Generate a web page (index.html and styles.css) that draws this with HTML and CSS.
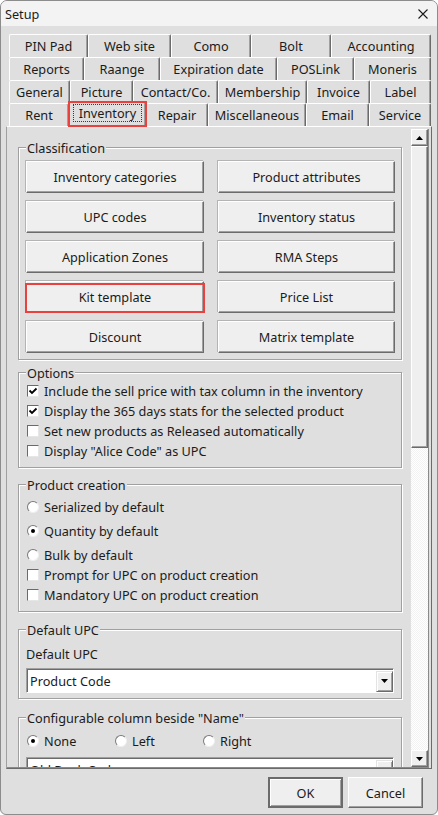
FILE: index.html
```html
<!DOCTYPE html>
<html>
<head>
<meta charset="utf-8">
<title>Setup</title>
<link rel="stylesheet" href="styles.css">
</head>
<body>
<div class="window">
  <div class="titlebar">
    <span class="title">Setup</span>
    <svg class="close" viewBox="0 0 10 10" width="10" height="10"><path d="M0.5 0.5 L9.5 9.5 M9.5 0.5 L0.5 9.5" stroke="#1b1b1b" stroke-width="1.1" fill="none"/></svg>
  </div>

  <div class="tabs">
    <div class="tabrow r1">
      <div class="tab">PIN Pad</div><div class="tab">Web site</div><div class="tab">Como</div><div class="tab">Bolt</div><div class="tab">Accounting</div>
    </div>
    <div class="tabrow r2">
      <div class="tab">Reports</div><div class="tab">Raange</div><div class="tab">Expiration date</div><div class="tab">POSLink</div><div class="tab">Moneris</div>
    </div>
    <div class="tabrow r3">
      <div class="tab">General</div><div class="tab">Picture</div><div class="tab">Contact/Co.</div><div class="tab">Membership</div><div class="tab">Invoice</div><div class="tab">Label</div>
    </div>
    <div class="tabrow r4">
      <div class="tab">Rent</div><div class="tab sel mark"><span class="focus">Inventory</span></div><div class="tab">Repair</div><div class="tab">Miscellaneous</div><div class="tab">Email</div><div class="tab">Service</div>
    </div>
  </div>

  <div class="panel">
    <div class="viewport">
      <div class="content">
        <div class="group g-class">
          <div class="legend">Classification</div>
          <div class="btngrid">
            <div class="btn">Inventory categories</div>
            <div class="btn">Product attributes</div>
            <div class="btn">UPC codes</div>
            <div class="btn">Inventory status</div>
            <div class="btn">Application Zones</div>
            <div class="btn">RMA Steps</div>
            <div class="btn mark">Kit template</div>
            <div class="btn">Price List</div>
            <div class="btn">Discount</div>
            <div class="btn">Matrix template</div>
          </div>
        </div>

        <div class="group g-opt">
          <div class="legend">Options</div>
          <div class="row chk"><span class="cb on"><svg viewBox="0 0 10 10" width="10" height="10"><path d="M1.5 4.5 L4 7 L8.5 2.5" stroke="#000" stroke-width="1.8" fill="none"/></svg></span>Include the sell price with tax column in the inventory</div>
          <div class="row chk"><span class="cb on"><svg viewBox="0 0 10 10" width="10" height="10"><path d="M1.5 4.5 L4 7 L8.5 2.5" stroke="#000" stroke-width="1.8" fill="none"/></svg></span>Display the 365 days stats for the selected product</div>
          <div class="row chk"><span class="cb"></span>Set new products as Released automatically</div>
          <div class="row chk"><span class="cb"></span>Display "Alice Code" as UPC</div>
        </div>

        <div class="group g-prod">
          <div class="legend">Product creation</div>
          <div class="radios">
            <div class="row rad"><span class="rb"></span>Serialized by default</div>
            <div class="row rad"><span class="rb on"></span>Quantity by default</div>
            <div class="row rad"><span class="rb"></span>Bulk by default</div>
          </div>
          <div class="checks">
            <div class="row chk"><span class="cb"></span>Prompt for UPC on product creation</div>
            <div class="row chk"><span class="cb"></span>Mandatory UPC on product creation</div>
          </div>
        </div>

        <div class="group g-upc">
          <div class="legend">Default UPC</div>
          <div class="label">Default UPC</div>
          <div class="combo">
            <span class="combo-text">Product Code</span>
            <span class="drop"><svg viewBox="0 0 7 4" width="7" height="4"><path d="M0 0 H7 L3.5 4 Z" fill="#000"/></svg></span>
          </div>
        </div>

        <div class="group g-conf">
          <div class="legend">Configurable column beside "Name"</div>
          <div class="radrow">
            <div class="row rad"><span class="rb on"></span>None</div>
            <div class="row rad"><span class="rb"></span>Left</div>
            <div class="row rad"><span class="rb"></span>Right</div>
          </div>
          <div class="combo">
            <span class="combo-text">Old Bank Code</span>
            <span class="drop"><svg viewBox="0 0 7 4" width="7" height="4"><path d="M0 0 H7 L3.5 4 Z" fill="#000"/></svg></span>
          </div>
        </div>
      </div>

      <div class="scrollbar">
        <div class="sb-btn"><svg viewBox="0 0 7 4" width="7" height="4"><path d="M0 4 H7 L3.5 0 Z" fill="#000"/></svg></div>
        <div class="sb-thumb"></div>
        <div class="sb-track"></div>
        <div class="sb-btn"><svg viewBox="0 0 7 4" width="7" height="4"><path d="M0 0 H7 L3.5 4 Z" fill="#000"/></svg></div>
      </div>
    </div>
  </div>

  <div class="footer">
    <div class="dbtn default">OK</div>
    <div class="dbtn">Cancel</div>
  </div>
</div>
</body>
</html>
```

FILE: styles.css
```css
* { box-sizing: border-box; }
html, body { margin: 0; padding: 0; background: #ffffff; }
body {
  font-family: "Noto Sans", "Open Sans", sans-serif;
  font-size: 12.7px;
  color: #1b1b1b;
  line-height: 16px;
}

.window {
  width: 438px;
  height: 815px;
  border: 1px solid #8c8c8c;
  border-radius: 7px 7px 6px 6px;
  background: #dfdfdf;
  overflow: hidden;
  display: flex;
  flex-direction: column;
}

.titlebar {
  flex: none;
  height: 25px;
  background: #f3f3f3;
  display: flex;
  align-items: center;
  justify-content: space-between;
  padding: 0 9px 0 4px;
}
.close { display: block; }

/* tabs */
.tabs {
  flex: none;
  margin: 8px 0 0 8px;
  width: 422px;
  display: flex;
  flex-direction: column;
}
.tabrow { display: grid; grid-template-rows: 23px; }
.r1 { grid-template-columns: 79px 83px 80px 80px 100px; }
.r2 { grid-template-columns: 75px 76px 117px 77px 77px; }
.r3 { grid-template-columns: 61px 63px 85px 89px 63px 61px; }
.r4 { grid-template-columns: 60px 77px 62px 98px 63px 62px; }
.tab {
  display: flex;
  align-items: center;
  justify-content: center;
  white-space: nowrap;
  border-top: 1px solid #ffffff;
  border-left: 1px solid #ffffff;
  border-right: 1px solid #6b6b6b;
  box-shadow: inset -1px 0 0 #a0a0a0;
  border-radius: 2px 2px 0 0;
  background: #dfdfdf;
}
.tab.sel {
  margin-top: -2px;
  height: 26px;
  position: relative;
  z-index: 1;
  padding-bottom: 3px;
}
.focus {
  border: 1px dotted #3a3a3a;
  padding: 0 5px;
  line-height: 16px;
}
.mark { position: relative; }
.mark::after {
  content: "";
  position: absolute;
  border: 2px solid #e8413e;
  pointer-events: none;
}
.tab.mark::after { top: -1px; left: -2px; right: -2px; bottom: 0; }
.btn.mark::after { top: 1px; left: -2px; right: -2px; bottom: -1px; }

/* panel */
.panel {
  flex: none;
  margin-left: 5px;
  width: 426px;
  height: 643px;
  border-top: 1px solid #ffffff;
  border-left: 1px solid #a0a0a0;
  border-right: 1px solid #6b6b6b;
  border-bottom: 1px solid #6b6b6b;
  padding: 2px 2px 0 0;
}
.viewport {
  display: flex;
  height: 639px;
  border-bottom: 1px solid #8a8a8a;
}
.content {
  width: 404px;
  height: 638px;
  overflow: hidden;
  padding: 18px 9px 0 11px;
}

/* scrollbar */
.scrollbar {
  width: 18px;
  height: 638px;
  border-right: 1px solid #8a8a8a;
  display: flex;
  flex-direction: column;
}
.sb-btn {
  flex: none;
  height: 17px;
  display: flex;
  align-items: center;
  justify-content: center;
  background: #efefef;
  border-top: 1px solid #ffffff;
  border-left: 1px solid #ffffff;
  border-right: 1px solid #6b6b6b;
  border-bottom: 1px solid #6b6b6b;
  box-shadow: inset -1px -1px 0 #a0a0a0;
}
.sb-btn svg { display: block; }
.sb-thumb {
  flex: none;
  height: 302px;
  background: #efefef;
  border-top: 1px solid #ffffff;
  border-left: 1px solid #ffffff;
  border-right: 1px solid #6b6b6b;
  border-bottom: 1px solid #6b6b6b;
  box-shadow: inset -1px -1px 0 #a0a0a0;
}
.sb-track {
  flex: 1;
  background: repeating-conic-gradient(#f2f2f2 0 25%, #ffffff 0 50%) 0 0 / 2px 2px;
}

/* group boxes */
.group {
  width: 384px;
  border: 1px solid #a0a0a0;
  box-shadow: 1px 1px 0 #ffffff, inset 1px 1px 0 #ffffff;
  padding: 0 6px 6px 7px;
}
.legend {
  width: max-content;
  height: 16px;
  margin-top: -8px;
  padding: 0 1px;
  background: #dfdfdf;
  white-space: nowrap;
}
.g-opt { margin-top: 12px; }
.g-prod { margin-top: 16px; }
.g-upc { margin-top: 17px; padding-bottom: 5px; }
.g-conf { margin-top: 18px; }

.btngrid {
  margin-top: 5px;
  display: grid;
  grid-template-columns: 178px 177px;
  grid-auto-rows: 32px;
  column-gap: 14px;
  row-gap: 8px;
}
.btn {
  display: flex;
  align-items: center;
  justify-content: center;
  background: #efefef;
  border-top: 1px solid #ffffff;
  border-left: 1px solid #ffffff;
  border-right: 1px solid #6b6b6b;
  border-bottom: 1px solid #6b6b6b;
  box-shadow: inset -1px -1px 0 #a0a0a0, -1px -1px 0 #b4b4b4;
  white-space: nowrap;
}

/* rows */
.row {
  display: flex;
  align-items: center;
  gap: 5px;
  padding-left: 1px;
  white-space: nowrap;
}
.chk { height: 20px; }
.rad { height: 24px; }
.radios { margin-top: 2px; }
.checks { margin-top: -2px; }

.cb {
  flex: none;
  width: 12px;
  height: 12px;
  background: #ffffff;
  border-top: 1px solid #6b6b6b;
  border-left: 1px solid #6b6b6b;
  border-right: 1px solid #e6e6e6;
  border-bottom: 1px solid #e6e6e6;
  display: flex;
  align-items: center;
  justify-content: center;
}
.cb svg { display: block; }

.rb {
  flex: none;
  width: 12px;
  height: 12px;
  border-radius: 50%;
  background: #ffffff;
  border: 1px solid;
  border-color: #7a7a7a #f0f0f0 #f0f0f0 #7a7a7a;
  display: flex;
  align-items: center;
  justify-content: center;
}
.rb.on::after {
  content: "";
  width: 4px;
  height: 4px;
  border-radius: 50%;
  background: #000000;
}

.label { margin-top: 8px; height: 16px; }

.combo {
  margin-top: 6px;
  width: 368px;
  height: 25px;
  background: #ffffff;
  border-top: 1px solid #a0a0a0;
  border-left: 1px solid #a0a0a0;
  border-right: 1px solid #ffffff;
  border-bottom: 1px solid #ffffff;
  box-shadow: inset 1px 1px 0 #6b6b6b;
  display: flex;
  align-items: center;
  justify-content: space-between;
  padding: 1px 0 0 3px;
}
.drop {
  width: 17px;
  height: 21px;
  display: flex;
  align-items: center;
  justify-content: center;
  background: #efefef;
  border-top: 1px solid #e3e3e3;
  border-left: 1px solid #e3e3e3;
  border-right: 1px solid #6b6b6b;
  border-bottom: 1px solid #6b6b6b;
  box-shadow: inset 1px 1px 0 #ffffff, inset -1px -1px 0 #a0a0a0;
}
.drop svg { display: block; }

.radrow {
  margin-top: 5px;
  display: grid;
  grid-template-columns: 88px 88px 88px;
}
.radrow .rad { height: 20px; }

/* footer */
.footer {
  flex: none;
  display: flex;
  justify-content: flex-end;
  gap: 5px;
  padding: 8px 14px 0 0;
}
.dbtn {
  width: 75px;
  height: 31px;
  display: flex;
  align-items: center;
  justify-content: center;
  background: #efefef;
  border-top: 1px solid #ffffff;
  border-left: 1px solid #ffffff;
  border-right: 1px solid #6b6b6b;
  border-bottom: 1px solid #6b6b6b;
  box-shadow: inset -1px -1px 0 #a0a0a0;
}
.dbtn.default {
  border: 2px solid #6b6b6b;
  box-shadow: inset 1px 1px 0 #ffffff, inset -1px -1px 0 #a0a0a0;
}
```
